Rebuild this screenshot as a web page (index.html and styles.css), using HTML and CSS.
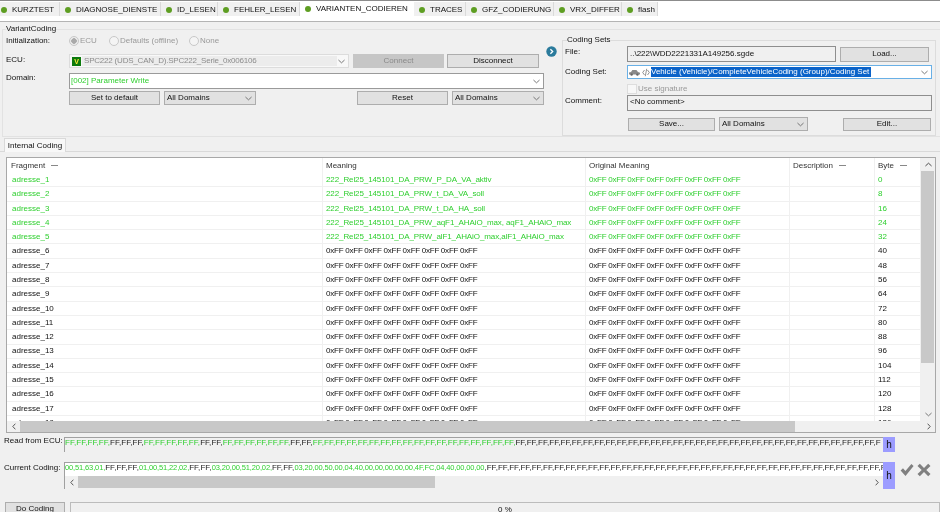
FILE: index.html
```html
<!DOCTYPE html>
<html lang="en">
<head>
<meta charset="utf-8">
<title>VariantCoding</title>
<link rel="stylesheet" href="styles.css">
</head>
<body>
<svg class="defs" width="0" height="0" aria-hidden="true">
  <symbol id="down" viewBox="0 0 8 5"><path d="M.5.8 4 4 7.5.8" fill="none" stroke="#666" stroke-width="1"/></symbol>
  <symbol id="up" viewBox="0 0 8 5"><path d="M.5 4.2 4 1 7.5 4.2" fill="none" stroke="#333" stroke-width="1"/></symbol>
  <symbol id="left" viewBox="0 0 5 8"><path d="M4.2.5 1 4 4.2 7.5" fill="none" stroke="#333" stroke-width="1"/></symbol>
  <symbol id="right" viewBox="0 0 5 8"><path d="M.8.5 4 4 .8 7.5" fill="none" stroke="#333" stroke-width="1"/></symbol>
</svg>
<div class="app">
  <nav class="tabs">
    <div class="tab first w60"><i class="dot"></i>KURZTEST</div>
    <div class="tab w101"><i class="dot"></i>DIAGNOSE_DIENSTE</div>
    <div class="tab w57"><i class="dot"></i>ID_LESEN</div>
    <div class="tab w82"><i class="dot"></i>FEHLER_LESEN</div>
    <div class="tab active"><i class="dot"></i>VARIANTEN_CODIEREN</div>
    <div class="tab w52"><i class="dot"></i>TRACES</div>
    <div class="tab w88"><i class="dot"></i>GFZ_CODIERUNG</div>
    <div class="tab w68"><i class="dot"></i>VRX_DIFFER</div>
    <div class="tab w36"><i class="dot"></i>flash</div>
  </nav>

  <fieldset class="outer">
    <legend>VariantCoding</legend>
    <div class="outer-body">
      <div class="left">
        <div class="row init">
          <span class="label">Initialization:</span>
          <label class="radio w40"><i class="circle on"></i>ECU</label>
          <label class="radio w80"><i class="circle"></i>Defaults (offline)</label>
          <label class="radio"><i class="circle"></i>None</label>
        </div>
        <div class="row ecu">
          <span class="label">ECU:</span>
          <div class="combo ecu-combo">
            <i class="v-icon">V</i><span class="ecu-text">SPC222 (UDS_CAN_D).SPC222_Serie_0x006106</span>
            <svg class="chev"><use href="#down"/></svg>
          </div>
          <button class="btn disabled connect">Connect</button>
          <button class="btn disconnect">Disconnect</button>
        </div>
        <div class="row domain">
          <span class="label top">Domain:</span>
          <div class="combo domain-combo"><span class="green">[002] Parameter Write</span><svg class="chev"><use href="#down"/></svg></div>
        </div>
        <div class="row actions">
          <span class="label"></span>
          <button class="btn b91">Set to default</button>
          <div class="select s92">All Domains<svg class="chev"><use href="#down"/></svg></div>
          <span class="spacer"></span>
          <button class="btn b91">Reset</button>
          <div class="select s92">All Domains<svg class="chev"><use href="#down"/></svg></div>
        </div>
      </div>

      <div class="go"><svg width="11" height="11" viewBox="0 0 11 11"><circle cx="5.5" cy="5.5" r="5.2" fill="#2b7b9c"/><path d="M4.4 3.2 6.7 5.5 4.4 7.8" fill="none" stroke="#fff" stroke-width="1.3"/></svg></div>

      <fieldset class="sets">
        <legend>Coding Sets</legend>
        <div class="row file">
          <span class="label2 top">File:</span>
          <div class="readonly file-box">..\222\WDD2221331A149256.sgde</div>
          <button class="btn load">Load...</button>
        </div>
        <div class="row cset">
          <span class="label2">Coding Set:</span>
          <div class="combo focus">
            <svg class="car" width="11" height="7" viewBox="0 0 11 7"><path d="M0 5V3.6L2 3 3.4 1h4L9 3l2 .8V5.400H0Z" fill="#8a8a8a"/><circle cx="2.600" cy="5.600" r="1.200" fill="#666"/><circle cx="8.400" cy="5.600" r="1.200" fill="#666"/></svg>
            <svg class="code" width="8" height="9" viewBox="0 0 8 9"><path d="M2.500 2 .7 4.500l1.800 2.500M5.500 2l1.800 2.500L5.500 7M4.700.8 3.300 8.200" fill="none" stroke="#777" stroke-width=".8"/></svg>
            <span class="selected">Vehicle (Vehicle)/CompleteVehicleCoding (Group)/Coding Set</span>
            <svg class="chev"><use href="#down"/></svg>
          </div>
        </div>
        <div class="row sign">
          <span class="label2"></span>
          <label class="check"><i class="box"></i>Use signature</label>
        </div>
        <div class="row comment">
          <span class="label2 top">Comment:</span>
          <div class="readonly comment-box">&lt;No comment&gt;</div>
        </div>
        <div class="row set-actions">
          <span class="label2 shift"></span>
          <button class="btn save">Save...</button>
          <div class="select s89">All Domains<svg class="chev"><use href="#down"/></svg></div>
          <span class="spacer"></span>
          <button class="btn edit">Edit...</button>
        </div>
      </fieldset>
    </div>
  </fieldset>

  <div class="subtabs"><div class="subtab">Internal Coding</div></div>

  <section class="gridbox">
    <div class="grid-main">
      <div class="grid-view">
        <div class="gr head">
          <div>Fragment<i class="dash"></i></div><div>Meaning</div><div>Original Meaning</div><div>Description<i class="dash"></i></div><div>Byte<i class="dash"></i></div>
        </div>
        <div class="gr green"><div>adresse_1</div><div class="mean">222_Rel25_145101_DA_PRW_P_DA_VA_aktiv</div><div class="ff">0xFF 0xFF 0xFF 0xFF 0xFF 0xFF 0xFF 0xFF</div><div></div><div>0</div></div>
        <div class="gr green"><div>adresse_2</div><div class="mean">222_Rel25_145101_DA_PRW_t_DA_VA_soll</div><div class="ff">0xFF 0xFF 0xFF 0xFF 0xFF 0xFF 0xFF 0xFF</div><div></div><div>8</div></div>
        <div class="gr green"><div>adresse_3</div><div class="mean">222_Rel25_145101_DA_PRW_t_DA_HA_soll</div><div class="ff">0xFF 0xFF 0xFF 0xFF 0xFF 0xFF 0xFF 0xFF</div><div></div><div>16</div></div>
        <div class="gr green"><div>adresse_4</div><div class="mean">222_Rel25_145101_DA_PRW_aqF1_AHAiO_max, aqF1_AHAiO_max</div><div class="ff">0xFF 0xFF 0xFF 0xFF 0xFF 0xFF 0xFF 0xFF</div><div></div><div>24</div></div>
        <div class="gr green"><div>adresse_5</div><div class="mean">222_Rel25_145101_DA_PRW_alF1_AHAiO_max,alF1_AHAiO_max</div><div class="ff">0xFF 0xFF 0xFF 0xFF 0xFF 0xFF 0xFF 0xFF</div><div></div><div>32</div></div>
        <div class="gr"><div>adresse_6</div><div class="ff">0xFF 0xFF 0xFF 0xFF 0xFF 0xFF 0xFF 0xFF</div><div class="ff">0xFF 0xFF 0xFF 0xFF 0xFF 0xFF 0xFF 0xFF</div><div></div><div>40</div></div>
        <div class="gr"><div>adresse_7</div><div class="ff">0xFF 0xFF 0xFF 0xFF 0xFF 0xFF 0xFF 0xFF</div><div class="ff">0xFF 0xFF 0xFF 0xFF 0xFF 0xFF 0xFF 0xFF</div><div></div><div>48</div></div>
        <div class="gr"><div>adresse_8</div><div class="ff">0xFF 0xFF 0xFF 0xFF 0xFF 0xFF 0xFF 0xFF</div><div class="ff">0xFF 0xFF 0xFF 0xFF 0xFF 0xFF 0xFF 0xFF</div><div></div><div>56</div></div>
        <div class="gr"><div>adresse_9</div><div class="ff">0xFF 0xFF 0xFF 0xFF 0xFF 0xFF 0xFF 0xFF</div><div class="ff">0xFF 0xFF 0xFF 0xFF 0xFF 0xFF 0xFF 0xFF</div><div></div><div>64</div></div>
        <div class="gr"><div>adresse_10</div><div class="ff">0xFF 0xFF 0xFF 0xFF 0xFF 0xFF 0xFF 0xFF</div><div class="ff">0xFF 0xFF 0xFF 0xFF 0xFF 0xFF 0xFF 0xFF</div><div></div><div>72</div></div>
        <div class="gr"><div>adresse_11</div><div class="ff">0xFF 0xFF 0xFF 0xFF 0xFF 0xFF 0xFF 0xFF</div><div class="ff">0xFF 0xFF 0xFF 0xFF 0xFF 0xFF 0xFF 0xFF</div><div></div><div>80</div></div>
        <div class="gr"><div>adresse_12</div><div class="ff">0xFF 0xFF 0xFF 0xFF 0xFF 0xFF 0xFF 0xFF</div><div class="ff">0xFF 0xFF 0xFF 0xFF 0xFF 0xFF 0xFF 0xFF</div><div></div><div>88</div></div>
        <div class="gr"><div>adresse_13</div><div class="ff">0xFF 0xFF 0xFF 0xFF 0xFF 0xFF 0xFF 0xFF</div><div class="ff">0xFF 0xFF 0xFF 0xFF 0xFF 0xFF 0xFF 0xFF</div><div></div><div>96</div></div>
        <div class="gr"><div>adresse_14</div><div class="ff">0xFF 0xFF 0xFF 0xFF 0xFF 0xFF 0xFF 0xFF</div><div class="ff">0xFF 0xFF 0xFF 0xFF 0xFF 0xFF 0xFF 0xFF</div><div></div><div>104</div></div>
        <div class="gr"><div>adresse_15</div><div class="ff">0xFF 0xFF 0xFF 0xFF 0xFF 0xFF 0xFF 0xFF</div><div class="ff">0xFF 0xFF 0xFF 0xFF 0xFF 0xFF 0xFF 0xFF</div><div></div><div>112</div></div>
        <div class="gr"><div>adresse_16</div><div class="ff">0xFF 0xFF 0xFF 0xFF 0xFF 0xFF 0xFF 0xFF</div><div class="ff">0xFF 0xFF 0xFF 0xFF 0xFF 0xFF 0xFF 0xFF</div><div></div><div>120</div></div>
        <div class="gr"><div>adresse_17</div><div class="ff">0xFF 0xFF 0xFF 0xFF 0xFF 0xFF 0xFF 0xFF</div><div class="ff">0xFF 0xFF 0xFF 0xFF 0xFF 0xFF 0xFF 0xFF</div><div></div><div>128</div></div>
        <div class="gr"><div>adresse_18</div><div class="ff">0xFF 0xFF 0xFF 0xFF 0xFF 0xFF 0xFF 0xFF</div><div class="ff">0xFF 0xFF 0xFF 0xFF 0xFF 0xFF 0xFF 0xFF</div><div></div><div>136</div></div>
      </div>
      <div class="vscroll">
        <div class="vbtn"><svg class="chev2"><use href="#up"/></svg></div>
        <div class="vtrack"><div class="vthumb"></div></div>
        <div class="vbtn"><svg class="chev2"><use href="#down"/></svg></div>
      </div>
    </div>
    <div class="hscroll big">
      <div class="hbtn"><svg class="chev3"><use href="#left"/></svg></div>
      <div class="htrack"><div class="hthumb t1"></div></div>
      <div class="hbtn"><svg class="chev3"><use href="#right"/></svg></div>
    </div>
  </section>

  <div class="hexrow read">
    <span class="hexlabel">Read from ECU:</span>
    <div class="hexfield readfield">
      <div class="hextext"><span class="green">FF,FF,FF,FF,</span>FF,FF,FF,<span class="green">FF,FF,FF,FF,FF,</span>FF,FF,<span class="green">FF,FF,FF,FF,FF,FF,</span>FF,FF,<span class="green">FF,FF,FF,FF,FF,FF,FF,FF,FF,FF,FF,FF,FF,FF,FF,FF,FF,FF,</span>FF,FF,FF,FF,FF,FF,FF,FF,FF,FF,FF,FF,FF,FF,FF,FF,FF,FF,FF,FF,FF,FF,FF,FF,FF,FF,FF,FF,FF,FF,FF,FF,F</div>
    </div>
    <div class="hbox">h</div>
  </div>

  <div class="hexrow current">
    <span class="hexlabel">Current Coding:</span>
    <div class="hexfield curfield">
      <div class="hextext white"><span class="green nums">00,51,63,01,</span>FF,FF,FF,<span class="green nums">01,00,51,22,02,</span>FF,FF,<span class="green nums">03,20,00,51,20,02,</span>FF,FF,<span class="green nums">03,20,00,50,00,04,40,00,00,00,00,00,4F,FC,04,40,00,00,00</span>,FF,FF,FF,FF,FF,FF,FF,FF,FF,FF,FF,FF,FF,FF,FF,FF,FF,FF,FF,FF,FF,FF,FF,FF,FF,FF,FF,FF,FF,FF,FF,FF,FF,FF,FF,F</div>
      <div class="hscroll small">
        <div class="hbtn"><svg class="chev3"><use href="#left"/></svg></div>
        <div class="htrack"><div class="hthumb t2"></div></div>
        <div class="hbtn"><svg class="chev3"><use href="#right"/></svg></div>
      </div>
    </div>
    <div class="hbox tall">h</div>
    <div class="marks">
      <svg width="14" height="14" viewBox="0 0 14 14"><path d="M.6 7.500 3 5.300 5.400 8 11.400 1 13.600 3 5.500 13Z" fill="#808080"/></svg>
      <svg width="14" height="14" viewBox="0 0 14 14"><path d="M2.800.8 7 5 11.200.8 13.500 3 9.300 7l4.200 4-2.300 2.200L7 9l-4.200 4.200L.5 11l4.200-4L.5 3Z" fill="#808080"/></svg>
    </div>
  </div>

  <div class="bottom">
    <button class="btn do">Do Coding</button>
    <div class="progress">0 %</div>
  </div>
</div>
</body>
</html>
```

FILE: styles.css
```css
* { box-sizing: border-box; }
html, body { margin: 0; padding: 0; width: 940px; height: 512px; overflow: hidden; background: #f0f0f0; }
.defs { position: absolute; }
.app { width: 940px; height: 512px; overflow: hidden; display: flex; flex-direction: column; background: #f0f0f0; color: #111; font: 8px/10px "Liberation Sans", Arial, sans-serif; filter: blur(.25px); }
i { font-style: normal; display: block; }
button { font: inherit; color: #111; padding: 0; margin: 0; }
.green { color: #2fcf2f; }

/* top tab bar */
.tabs { flex: none; height: 22px; display: flex; align-items: flex-start; background: #fff; border-top: 1px solid #8c8c8c; border-bottom: 1px solid #b4b4b4; padding-top: 1px; }
.tab { height: 14px; display: flex; align-items: center; padding: 1px 0 0 5px; background: #f0f0f0; border-right: 1px solid #dadada; white-space: nowrap; }
.tab.first { padding-left: 1px; }
.tab .dot { width: 6px; height: 6px; border-radius: 50%; background: #5e9e22; margin-right: 5px; flex: none; }
.w60 { width: 60px; } .w101 { width: 101px; } .w57 { width: 57px; } .w82 { width: 82px; }
.w52 { width: 52px; } .w88 { width: 88px; } .w68 { width: 68px; } .w36 { width: 36px; }
.tab.active { width: 114px; height: 15px; background: #fff; margin-top: -1px; padding-top: 0; border-right: 0; }

/* VariantCoding group */
fieldset { margin: 0; padding: 0; min-width: 0; border: 1px solid #dcdcdc; }
legend { padding: 0; margin-left: 0; height: 10px; line-height: 10px; }
.outer { flex: none; margin: 2px 0 0 2px; width: 938px; height: 113px; border-color: #e2e2e2; border-right: 0; padding-left: 3px; }
.outer-body { display: flex; align-items: flex-start; }
.left { width: 538px; flex: none; }
.row { display: flex; align-items: center; }
.label { width: 63px; flex: none; }
.label2 { width: 62px; flex: none; }
.top { align-self: flex-start; padding-top: 1px; }
.spacer { flex: 1; }

.init { height: 12px; margin-top: 1px; color: #999; }
.init .label { color: #111; }
.radio { display: flex; align-items: center; }
.radio.w40 { width: 40px; } .radio.w80 { width: 80px; }
.circle { width: 10px; height: 10px; border-radius: 50%; background: #f4f4f4; border: 1px solid #c8c8c8; margin-right: 1px; position: relative; }
.circle.on { background: radial-gradient(circle, #aaa 0 2.5px, #ececec 3px); }

.combo { position: relative; height: 100%; display: flex; align-items: center; background: #fff; border: 1px solid #9a9a9a; }
.chev { width: 7px; height: 5px; flex: none; margin-left: auto; margin-right: 3px; }
.ecu { height: 14px; margin-top: 7px; }
.ecu .label { margin-top: -2px; }
.ecu-combo { width: 280px; flex: none; border-color: #dcdcdc; background: #f8f8f8; padding-left: 2px; }
.v-icon { width: 9px; height: 9px; background: #0c7a0c; color: #ffe93b; font: bold 7px/9px "Liberation Sans", sans-serif; text-align: center; flex: none; }
.ecu-text { background: #ececec; color: #8c8c8c; width: 255px; height: 10px; padding-left: 2px; white-space: nowrap; margin-left: 1px; letter-spacing: -.2px; }
.btn { height: 14px; background: #e1e1e1; border: 1px solid #adadad; text-align: center; flex: none; }
.btn.disabled { background: #c6c6c6; border-color: #c6c6c6; color: #8a8a8a; }
.connect { width: 91px; margin-left: 4px; }
.disconnect { width: 92px; margin-left: 3px; }
.domain { height: 16px; margin-top: 5px; }
.domain .label { padding-top: 0; }
.domain-combo { width: 475px; flex: none; padding-left: 1px; }
.actions { height: 14px; margin-top: 2px; }
.b91 { width: 91px; }
.select { height: 14px; display: flex; align-items: center; background: #e1e1e1; border: 1px solid #adadad; padding-left: 2px; flex: none; }
.s92 { width: 92px; margin-left: 4px; }
.s89 { width: 89px; margin-left: 4px; }

.go { width: 11px; flex: none; margin: 12px 0 0 2px; line-height: 0; }

/* Coding Sets group */
.sets { width: 374px; height: 101px; margin: 1px 0 0 5px; padding: 1px 2px 0; }
.sets legend { margin-left: 2px; }
.file { height: 16px; }
.readonly { background: #f0f0f0; border: 1px solid #8e8e8e; padding-left: 2px; flex: none; color: #111; }
.file-box { width: 209px; height: 16px; line-height: 13px; }
.load { width: 89px; height: 15px; margin-left: 4px; }
.cset { height: 14px; margin-top: 3px; }
.focus { width: 305px; flex: none; border-color: #69b0e6; padding-left: 1px; }
.car { flex: none; }
.code { flex: none; margin: 0 1px 0 2px; }
.selected { background: #0a63c9; color: #fff; white-space: nowrap; height: 10px; width: 220px; }
.sign { height: 12px; margin-top: 4px; color: #999; }
.check { display: flex; align-items: center; }
.box { width: 10px; height: 10px; background: #f7f7f7; border: 1px solid #ddd; margin-right: 1px; }
.comment { height: 16px; margin-top: 0; }
.comment-box { width: 305px; height: 16px; line-height: 12px; background: #f0f0f0; }
.set-actions { height: 14px; margin-top: 6px; }
.shift { width: 63px; }
.save { width: 87px; height: 13px; }
.edit { width: 88px; height: 13px; margin-right: 2px; }

/* inner tab */
.subtabs { flex: none; height: 14px; margin-top: 1px; padding-left: 4px; border-bottom: 1px solid #d9d9d9; }
.subtab { width: 62px; height: 14px; background: #f8f8f8; border: 1px solid #d9d9d9; border-bottom: 0; text-align: center; line-height: 13px; }

/* grid */
.gridbox { flex: none; width: 930px; height: 276px; margin: 5px 0 0 6px; border: 1px solid #a8a8a8; background: #fff; display: flex; flex-direction: column; overflow: hidden; }
.grid-main { height: 263px; display: flex; flex: none; }
.grid-view { flex: 1; overflow: hidden; min-width: 0; }
.gr { display: grid; grid-template-columns: 316px 263px 204px 85px 46px; height: 14.3px; border-bottom: 1px solid #f0f0f0; color: #111; }
.gr.green { color: #2fcf2f; }
.gr > div { padding-left: 3px; border-right: 1px solid #f0f0f0; line-height: 13.5px; white-space: nowrap; overflow: hidden; display: flex; align-items: center; }
.gr > div:first-child { padding-left: 5px; }
.gr.head { height: 15px; border-bottom: 0; color: #333; }
.gr.head > div { padding-left: 3px; }
.gr.head > div:first-child { padding-left: 4px; }
.mean { letter-spacing: -.1px; }
.ff { letter-spacing: -.2px; word-spacing: -.3px; white-space: pre; }
.dash { width: 7px; height: 1px; background: #888; margin-left: 6px; }
.vscroll { width: 14px; flex: none; display: flex; flex-direction: column; background: #f0f0f0; }
.vbtn { height: 13px; flex: none; display: flex; align-items: center; justify-content: center; }
.chev2 { width: 7px; height: 5px; }
.vtrack { flex: 1; }
.vthumb { height: 192px; background: #c8c8c8; margin-right: 1px; }
.hscroll { display: flex; flex: none; background: #f0f0f0; }
.hscroll.big { height: 11px; }
.hscroll.small { height: 12px; }
.hbtn { width: 13px; flex: none; display: flex; align-items: center; justify-content: center; }
.chev3 { width: 4px; height: 7px; }
.htrack { flex: 1; }
.hthumb { height: 100%; background: #c8c8c8; }
.t1 { width: 775px; }
.t2 { width: 357px; }

/* hex rows */
.hexrow { flex: none; display: flex; align-items: flex-start; padding-left: 4px; }
.read { height: 15px; margin-top: 4px; }
.current { height: 27px; margin-top: 10px; }
.hexlabel { width: 60px; flex: none; white-space: nowrap; }
.read .hexlabel { margin-top: -1px; }
.current .hexlabel { margin-top: 1px; }
.hexfield { width: 819px; flex: none; border-left: 1px solid #a0a0a0; border-top: 1px solid #a0a0a0; overflow: hidden; }
.readfield { height: 15px; background: #f0f0f0; }
.curfield { height: 27px; }
.hextext { letter-spacing: .05px; line-height: 10px; height: 13px; white-space: nowrap; overflow: hidden; color: #222; }
.readfield .hextext { line-height: 9px; }
.hextext.white { background: #fff; }
.nums { font-size: 7.5px; letter-spacing: -.13px; }
.hbox { width: 12px; height: 15px; flex: none; background: #9c9cff; color: #111; font-size: 10px; line-height: 15px; text-align: center; }
.hbox.tall { height: 27px; line-height: 27px; }
.marks { display: flex; gap: 3px; margin: 1px 0 0 5px; line-height: 0; }

/* bottom */
.bottom { flex: none; display: flex; margin-top: 13px; padding-left: 5px; height: 14px; align-items: flex-start; }
.do { width: 60px; height: 14px; }
.progress { width: 870px; height: 14px; margin-left: 5px; border: 1px solid #bcbcbc; text-align: center; padding-top: 2px; background: #f0f0f0; }
```
